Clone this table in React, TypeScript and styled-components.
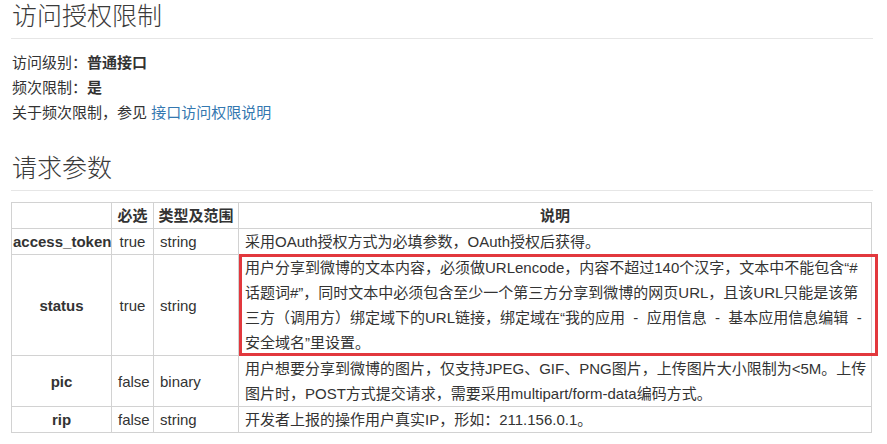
import React from "react";
import styled, { createGlobalStyle } from "styled-components";

const GlobalStyle = createGlobalStyle`
  body {
    margin: 0;
    background: #fff;
    color: #333;
    font-family: "Liberation Sans", "Noto Sans CJK SC", sans-serif;
    font-size: 15px;
    line-height: 25px;
  }
`;

const Page = styled.div`
  width: 862px;
  padding: 0 0 0 11px;
`;

const Heading = styled.h2<{ $top: number }>`
  margin: ${(p) => p.$top}px 0 0 0;
  padding: 0 0 6px 1px;
  font-size: 25px;
  font-weight: 300;
  line-height: 32px;
  color: #3a3a3a;
  border-bottom: 1px solid #e6e6e6;
`;

const InfoList = styled.div`
  margin-top: 11px;
  padding-left: 1px;
  p {
    margin: 0;
  }
  b {
    font-weight: 700;
  }
`;

const Link = styled.a`
  color: #3478b0;
  text-decoration: none;
`;

const Table = styled.table`
  margin-top: 11px;
  width: 861px;
  border-collapse: collapse;
  table-layout: fixed;
  td,
  th {
    border: 1px solid #d2d2d2;
    padding: 0 6px;
    line-height: 25px;
    vertical-align: middle;
  }
  th {
    font-weight: 700;
    padding: 0 2px;
    text-align: center;
  }
`;

const NameCell = styled.td`
  && {
    padding: 0 1px;
  }
  text-align: center;
  font-weight: 700;
  white-space: nowrap;
`;

const CenterCell = styled.td`
  text-align: center;
`;

const DescCell = styled.td`
  position: relative;
  white-space: pre;
`;

const Marker = styled.span`
  position: absolute;
  top: -1px;
  left: 0;
  right: -7px;
  bottom: -1px;
  border: 3px solid #e2383d;
  pointer-events: none;
`;

type Param = {
  name: string;
  required: string;
  type: string;
  desc: string[];
  marked?: boolean;
};

const params: Param[] = [
  {
    name: "access_token",
    required: "true",
    type: "string",
    desc: ["采用OAuth授权方式为必填参数，OAuth授权后获得。"],
  },
  {
    name: "status",
    required: "true",
    type: "string",
    marked: true,
    desc: [
      "用户分享到微博的文本内容，必须做URLencode，内容不超过140个汉字，文本中不能包含“#",
      "话题词#”，同时文本中必须包含至少一个第三方分享到微博的网页URL，且该URL只能是该第",
      "三方（调用方）绑定域下的URL链接，绑定域在“我的应用  -  应用信息  -  基本应用信息编辑  -",
      "安全域名”里设置。",
    ],
  },
  {
    name: "pic",
    required: "false",
    type: "binary",
    desc: [
      "用户想要分享到微博的图片，仅支持JPEG、GIF、PNG图片，上传图片大小限制为<5M。上传",
      "图片时，POST方式提交请求，需要采用multipart/form-data编码方式。",
    ],
  },
  {
    name: "rip",
    required: "false",
    type: "string",
    desc: ["开发者上报的操作用户真实IP，形如：211.156.0.1。"],
  },
];

export default function App() {
  return (
    <Page>
      <GlobalStyle />
      <Heading $top={0}>访问授权限制</Heading>
      <InfoList>
        <p>
          访问级别：<b>普通接口</b>
        </p>
        <p>
          频次限制：<b>是</b>
        </p>
        <p>
          关于频次限制，参见 <Link href="#">接口访问权限说明</Link>
        </p>
      </InfoList>
      <Heading $top={27}>请求参数</Heading>
      <Table>
        <colgroup>
          <col style={{ width: 100 }} />
          <col style={{ width: 42 }} />
          <col style={{ width: 85 }} />
          <col />
        </colgroup>
        <thead>
          <tr>
            <th></th>
            <th>必选</th>
            <th>类型及范围</th>
            <th>说明</th>
          </tr>
        </thead>
        <tbody>
          {params.map((p) => (
            <tr key={p.name}>
              <NameCell>{p.name}</NameCell>
              <CenterCell>{p.required}</CenterCell>
              <td>{p.type}</td>
              <DescCell>
                {p.desc.join("\n")}
                {p.marked && <Marker />}
              </DescCell>
            </tr>
          ))}
        </tbody>
      </Table>
    </Page>
  );
}
